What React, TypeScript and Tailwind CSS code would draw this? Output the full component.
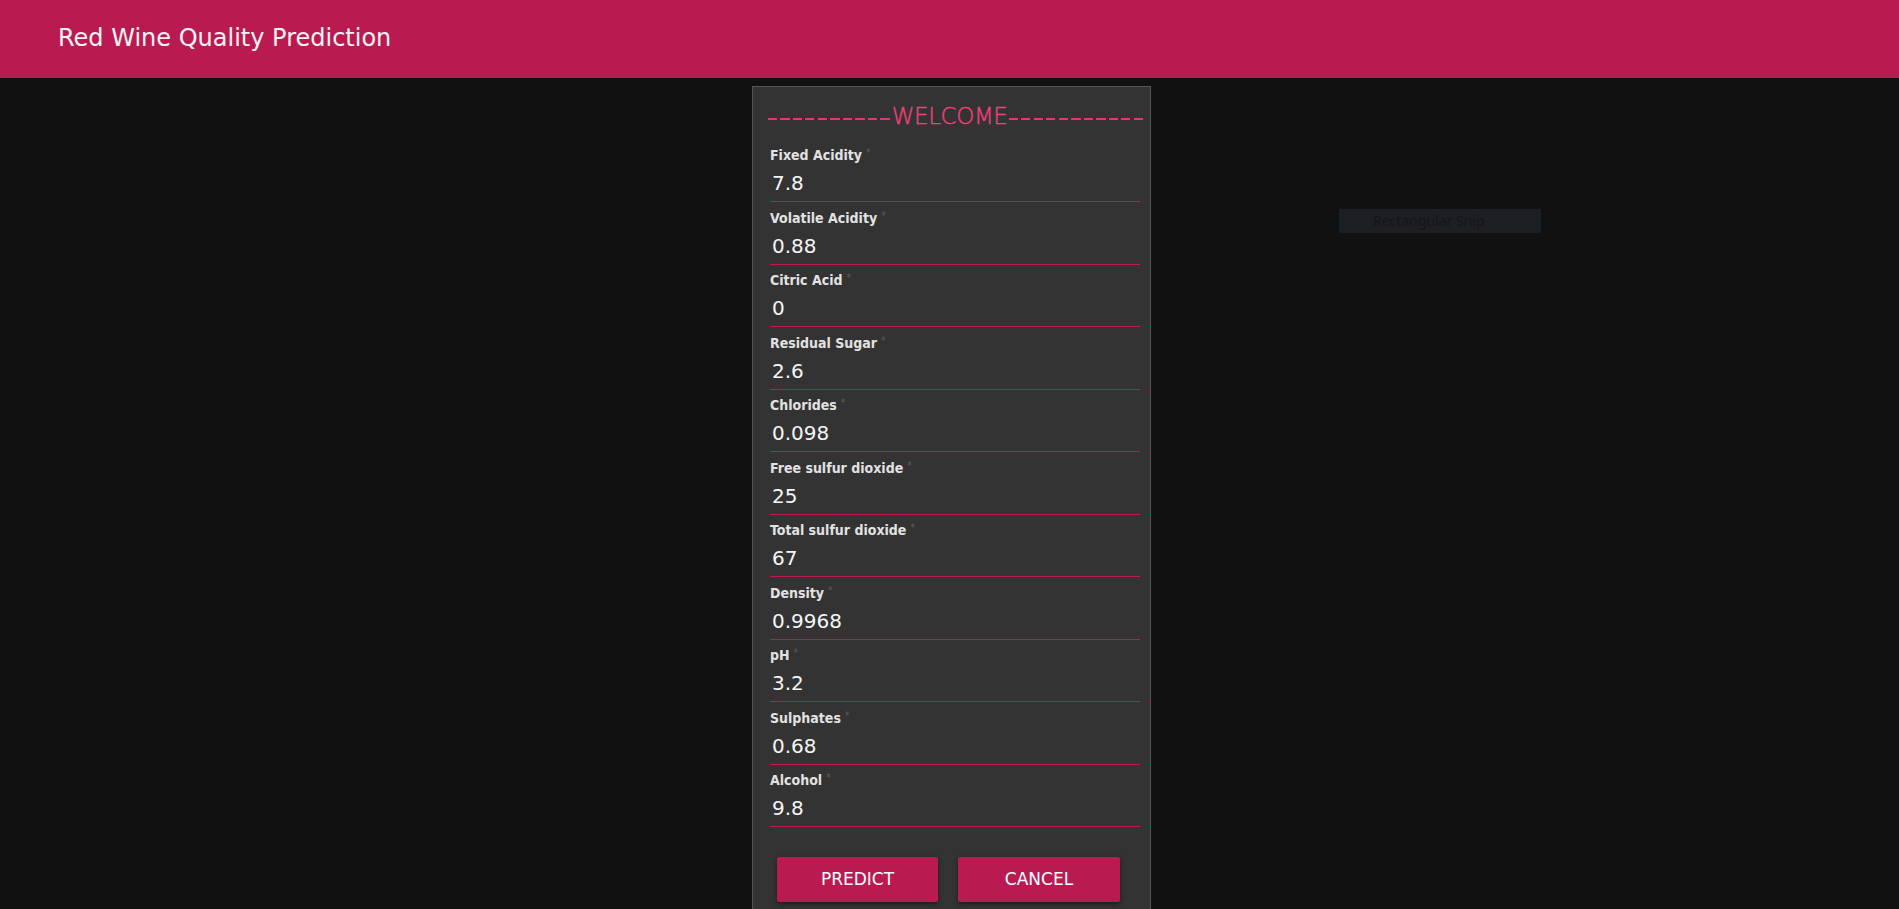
import React from "react";

const fields: [string, string][] = [
  ["Fixed Acidity", "7.8"],
  ["Volatile Acidity", "0.88"],
  ["Citric Acid", "0"],
  ["Residual Sugar", "2.6"],
  ["Chlorides", "0.098"],
  ["Free sulfur dioxide", "25"],
  ["Total sulfur dioxide", "67"],
  ["Density", "0.9968"],
  ["pH", "3.2"],
  ["Sulphates", "0.68"],
  ["Alcohol", "9.8"],
];

export default function App() {
  return (
    <div className="relative min-h-[909px] h-[909px] overflow-hidden bg-[#111111] font-['DejaVu_Sans',sans-serif]">
      <header className="h-[78px] bg-[#b91b50] flex items-center pl-[58px]">
        <h1 className="text-[24px] leading-none text-[#f7f2f4] pb-[2px]">Red Wine Quality Prediction</h1>
      </header>

      <div className="flex justify-center pt-[8px] pl-[4px]">
        <div className="w-[399px] h-[900px] bg-[#333333] border border-[#555555] pt-[15px] pl-[17px] pr-[10px]">
          <div className="h-[28px] flex items-center whitespace-nowrap -ml-[2px] -mr-[5px]">
            <span className="w-[125px] h-[1.5px] relative top-[3px] bg-[repeating-linear-gradient(90deg,#e4366f_0px,#e4366f_9px,transparent_9px,transparent_12.5px)]" />
            <span className="text-[23px] leading-[28px] tracking-[-0.4px] text-[#f23f7b] [-webkit-text-stroke:0.35px_#f23f7b] font-light font-['DejaVu_Sans_ExtraLight','DejaVu_Sans',sans-serif]">
              WELCOME
            </span>
            <span className="ml-[2px] w-[137px] h-[1.5px] relative top-[3px] bg-[repeating-linear-gradient(90deg,#e4366f_0px,#e4366f_9px,transparent_9px,transparent_12.5px)]" />
          </div>
          <div className="mt-[14px] flex flex-col">
            {fields.map(([label, value]) => (
              <div key={label} className="mb-[4.5px]">
                <div className="h-[22px] leading-[22px] text-[14px] font-bold text-[#e2e2e2] font-['DejaVu_Sans_Condensed','DejaVu_Sans',sans-serif] whitespace-nowrap">
                  {label}
                  <span className="ml-[4px] text-[10px] align-top relative top-[-2px] font-normal text-[#5c5c5c]">*</span>
                </div>
                <div className="h-[36px] leading-[35px] border-b border-[#c0184f] text-[20px] text-[#f5f5f5] pl-[2px]">
                  {value}
                </div>
              </div>
            ))}
          </div>
          <div className="flex gap-[20px] pl-[7px] mt-[25.5px]">
            <button className="w-[161px] h-[45px] rounded-[2px] bg-[#b91a50] text-white text-[17px] shadow-[0_2px_5px_rgba(0,0,0,0.45)] font-['DejaVu_Sans',sans-serif]">
              PREDICT
            </button>
            <button className="w-[162px] h-[45px] rounded-[2px] bg-[#b91a50] text-white text-[17px] shadow-[0_2px_5px_rgba(0,0,0,0.45)] font-['DejaVu_Sans',sans-serif]">
              CANCEL
            </button>
          </div>
        </div>
      </div>

      <div className="absolute left-[1339px] top-[209px] w-[202px] h-[24px] bg-[#1c1f23] text-[14px] leading-[24px] text-[#151618] pl-[34px] font-['Noto_Sans',sans-serif]">
        Rectangular Snip
      </div>
    </div>
  );
}
